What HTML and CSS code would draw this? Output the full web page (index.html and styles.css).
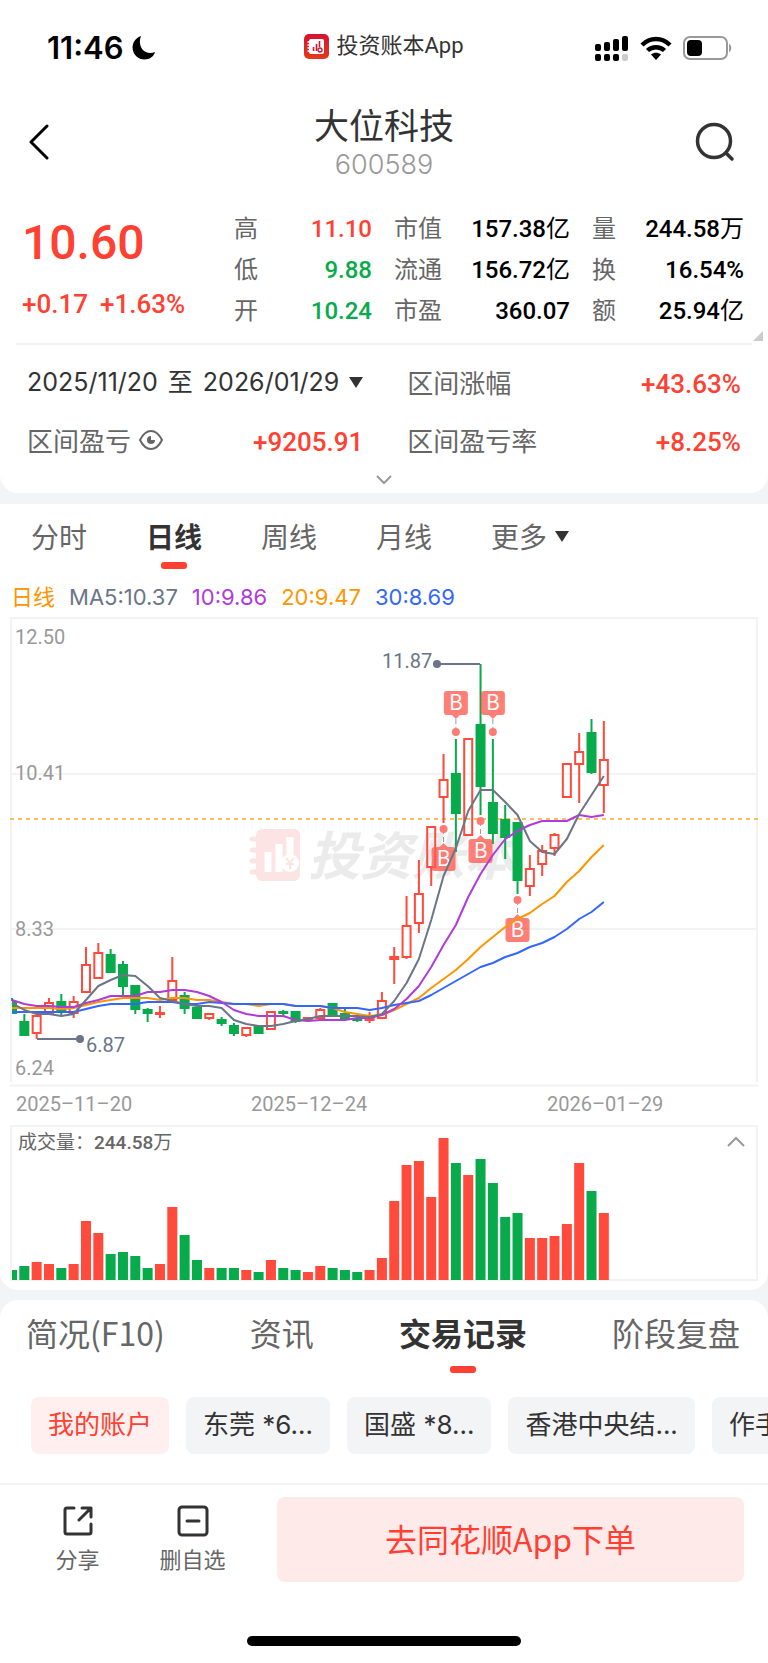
FILE: index.html
```
<!DOCTYPE html>
<html lang="zh-CN">
<head>
    <meta charset="UTF-8">
    <meta name="viewport" content="width=device-width, initial-scale=1.0">
    <title>大位科技 600589</title>
    <link rel="stylesheet" href="styles.css">
</head>
<body>
    <!-- 顶部卡片 -->
    <section class="card card-top">
        <div class="status-bar">
            <div class="status-time">
                <span>11:46</span>
                <svg width="24" height="26" viewBox="0 0 24 26"><path d="M9 1C0 4 -2 15 4 21c6 6 17 4 19-4C12 21 5 11 9 1z"/></svg>
            </div>
            <div class="status-app">
                <svg width="25" height="25" viewBox="0 0 25 25">
                    <defs><linearGradient id="logo" x1="0" y1="0" x2="0" y2="1"><stop offset="0" stop-color="#d8122f"/><stop offset="1" stop-color="#e23a1c"/></linearGradient></defs>
                    <rect width="25" height="25" rx="5" fill="url(#logo)"/>
                    <rect x="5" y="5" width="15" height="15" rx="2" fill="#fff"/>
                    <path d="M3.500 8h3M3.500 11h3M3.500 14h3M3.500 17h3" stroke="#fff" stroke-width="1.300"/>
                    <path d="M9.500 17v-4M12.500 17v-7M15.500 13V7" stroke="#d8122f" stroke-width="1.600"/>
                    <circle cx="16" cy="16" r="2" fill="none" stroke="#d8122f" stroke-width="1.300"/>
                </svg>
                <span>投资账本App</span>
            </div>
            <div class="status-icons">
                <svg width="34" height="25" viewBox="0 0 34 25">
                    <rect x="0" y="8" width="6" height="7" rx="2"/><rect x="9" y="6" width="6" height="9" rx="2"/>
                    <rect x="18" y="3" width="6" height="12" rx="2"/><rect x="27" y="0" width="6" height="15" rx="2"/>
                    <rect x="0" y="18" width="6" height="7" rx="2"/><rect x="9" y="18" width="6" height="7" rx="2"/>
                    <rect x="18" y="18" width="6" height="7" rx="2"/><rect x="27" y="18" width="6" height="7" rx="2" fill="#ccc"/>
                </svg>
                <svg width="32" height="24" viewBox="0 0 32 24">
                    <path d="M2 9C10 1 22 1 30 9" fill="none" stroke="#000" stroke-width="4.500"/>
                    <path d="M7.500 14.500C12 10 20 10 24.500 14.500" fill="none" stroke="#000" stroke-width="4.500"/>
                    <path d="M11 18.500C14 16 18 16 21 18.500L16 24z"/>
                </svg>
                <svg width="49" height="24" viewBox="0 0 49 24">
                    <rect x="1" y="1" width="43" height="22" rx="6" fill="none" stroke="#999" stroke-width="2"/>
                    <rect x="4" y="4" width="15" height="16" rx="4"/>
                    <path d="M46 8c3 1 3 7 0 8z" fill="#999"/>
                </svg>
            </div>
        </div>

        <header class="header">
            <button class="icon-btn" aria-label="返回">
                <svg width="22" height="36" viewBox="0 0 22 36"><path d="M19 2L3 18l16 16" fill="none" stroke="#000" stroke-width="3" stroke-linecap="round" stroke-linejoin="round"/></svg>
            </button>
            <div class="header-title">
                <h1>大位科技</h1>
                <p>600589</p>
            </div>
            <button class="icon-btn icon-search" aria-label="搜索">
                <svg width="40" height="40" viewBox="0 0 40 40" fill="none" stroke="#333" stroke-width="3.500" stroke-linecap="round"><circle cx="19" cy="19" r="16.500"/><path d="M31 31l6 6"/></svg>
            </button>
        </header>

        <!-- 行情 -->
        <div class="quote">
            <div class="quote-price">
                <div class="price">10.60</div>
                <div class="change"><span>+0.17</span><span>+1.63%</span></div>
            </div>
            <dl class="quote-stats">
                <div><dt>高</dt><dd class="up">11.10</dd></div>
                <div><dt>市值</dt><dd>157.38<span class="unit">亿</span></dd></div>
                <div><dt>量</dt><dd>244.58<span class="unit">万</span></dd></div>
                <div><dt>低</dt><dd class="down">9.88</dd></div>
                <div><dt>流通</dt><dd>156.72<span class="unit">亿</span></dd></div>
                <div><dt>换</dt><dd>16.54%</dd></div>
                <div><dt>开</dt><dd class="down">10.24</dd></div>
                <div><dt>市盈</dt><dd>360.07</dd></div>
                <div><dt>额</dt><dd>25.94<span class="unit">亿</span></dd></div>
            </dl>
        </div>

        <!-- 区间 -->
        <div class="range">
            <button class="range-date"><span>2025/11/20</span> <span>至</span> <span>2026/01/29</span><i class="caret"></i></button>
            <div class="range-item"><span>区间涨幅</span><b>+43.63%</b></div>
            <div class="range-item">
                <span>区间盈亏
                    <svg width="26" height="22" viewBox="0 0 26 22" fill="none" stroke="#666" stroke-width="2"><path d="M2 11C8-1 18-1 24 11C18 23 8 23 2 11z"/><circle cx="13" cy="11" r="4" fill="#666" stroke="none"/><path d="M13 11V6h5v5z" fill="#fff" stroke="none"/></svg>
                </span>
                <b>+9205.91</b>
            </div>
            <div class="range-item"><span>区间盈亏率</span><b>+8.25%</b></div>
        </div>
        <button class="expand" aria-label="展开">
            <svg width="18" height="10" viewBox="0 0 18 10"><path d="M2 1l7 7 7-7" fill="none" stroke="#999" stroke-width="2"/></svg>
        </button>
    </section>

    <!-- K线图 -->
    <section class="card card-chart">
        <nav class="tabs">
            <button>分时</button>
            <button class="active">日线</button>
            <button>周线</button>
            <button>月线</button>
            <button>更多<i class="caret"></i></button>
        </nav>
        <div class="ma">
            <span class="ma-name">日线</span>
            <span class="ma5">MA5:10.37</span>
            <span class="ma10">10:9.86</span>
            <span class="ma20">20:9.47</span>
            <span class="ma30">30:8.69</span>
        </div>
        <svg class="chart" id="kline" viewBox="0 614 768 506">
            <path class="frame" d="M11 1082V618H757V1082M10 1085.500H758"/>
            <path class="grid" d="M12 774H756M12 929H756"/>
            <g class="watermark">
                <rect x="256" y="829" width="44" height="52" rx="6" fill="#fce4e4"/>
                <path d="M252 839h9M252 850h9M252 861h9M252 872h9" stroke="#fce4e4" stroke-width="5" stroke-linecap="round"/>
                <path d="M268 872v-20M279 872v-28M290 858v-21" stroke="#fff" stroke-width="7"/>
                <circle cx="290" cy="863" r="9" fill="#fff"/>
                <path d="M286 858l4 5 4-5M290 863v6M286 864h8" fill="none" stroke="#fce4e4" stroke-width="2"/>
                <text x="308" y="875">投资账本</text>
            </g>
            <path class="cost" d="M10 819H758"/>
            <g id="candles"></g>
            <g class="extreme">
                <path d="M437 664H480M37 1039H80"/>
                <circle cx="437" cy="664" r="4"/>
                <circle cx="80" cy="1039" r="4"/>
                <text x="382" y="668">11.87</text>
                <text x="86" y="1052">6.87</text>
            </g>
            <g class="axis">
                <text x="15" y="644">12.50</text>
                <text x="15" y="780">10.41</text>
                <text x="15" y="936">8.33</text>
                <text x="15" y="1075">6.24</text>
                <text x="16" y="1111">2025–11–20</text>
                <text x="251" y="1111">2025–12–24</text>
                <text x="547" y="1111">2026–01–29</text>
            </g>
        </svg>
        <div class="volume">
            <svg class="chart" id="volume" viewBox="0 1120 768 170">
                <rect class="frame" x="11" y="1126" width="746" height="154"/>
                <text x="18" y="1149">成交量：<tspan class="vol-num">244.58</tspan>万</text>
                <g id="bars"></g>
            </svg>
            <button class="fold" aria-label="收起">
                <svg width="20" height="12" viewBox="0 0 20 12"><path d="M2 10l8-8 8 8" fill="none" stroke="#999" stroke-width="2"/></svg>
            </button>
        </div>
    </section>

    <!-- 交易记录 -->
    <section class="card card-record">
        <nav class="tabs tabs-record">
            <button>简况(F10)</button>
            <button>资讯</button>
            <button class="active">交易记录</button>
            <button>阶段复盘</button>
        </nav>
        <div class="accounts">
            <button class="selected">我的账户</button>
            <button>东莞 *6...</button>
            <button>国盛 *8...</button>
            <button>香港中央结...</button>
            <button>作手账户</button>
        </div>
    </section>

    <footer class="footer">
        <div class="actions">
            <button class="action">
                <svg width="32" height="32" viewBox="0 0 32 32" fill="none" stroke="#333" stroke-width="3" stroke-linecap="round" stroke-linejoin="round"><path d="M12 3H5a2 2 0 0 0-2 2v22a2 2 0 0 0 2 2h22a2 2 0 0 0 2-2V19M20 3h9v9M28 4L17 15"/></svg>
                分享
            </button>
            <button class="action">
                <svg width="32" height="32" viewBox="0 0 32 32" fill="none" stroke="#333" stroke-width="3" stroke-linecap="round"><rect x="2" y="2" width="28" height="28" rx="3"/><path d="M10 16h12"/></svg>
                删自选
            </button>
            <button class="order">去同花顺App下单</button>
        </div>
        <div class="home-bar"></div>
    </footer>

    <script src="script.js"></script>
</body>
</html>
```
FILE: styles.css
```
* {
    box-sizing: border-box;
}
body {
    margin: 0;
    background-color: #f3f4f6;
    font-family: "Noto Sans CJK SC", sans-serif;
    color: #333;
}
button {
    margin: 0;
    padding: 0;
    border: 0;
    background: none;
    font-family: inherit;
    color: inherit;
}
h1, p, dl, dd {
    margin: 0;
    font-weight: 400;
}
svg {
    display: block;
}
.card {
    background-color: #fff;
}
.card-top {
    border-radius: 0 0 18px 18px;
    margin-bottom: 11px;
}

/* 状态栏 */
.status-bar {
    display: grid;
    grid-template-columns: 1fr auto 1fr;
    align-items: center;
    height: 92px;
    padding: 4px 36px 0;
}
.status-time {
    display: flex;
    align-items: center;
    gap: 8px;
    padding-left: 11px;
    font: 600 31px/36px Inter, sans-serif;
    color: #000;
}
.status-app {
    display: flex;
    align-items: center;
    gap: 7px;
    padding-bottom: 4px;
    font: 400 22px/32px Roboto, "Noto Sans CJK SC", sans-serif;
}
.status-icons {
    display: flex;
    align-items: center;
    justify-content: flex-end;
    gap: 11px;
}

.header {
    display: grid;
    grid-template-columns: 60px 1fr 60px;
    align-items: center;
    padding: 10px 28px 22px;
}
.header-title {
    text-align: center;
}
.header-title h1 {
    font-size: 35px;
    line-height: 44px;
}
.header-title p {
    padding-top: 2px;
    font: 300 27px/34px Inter, sans-serif;
    color: #999;
}
.icon-search {
    justify-self: end;
    padding-right: 5px;
}

/* 行情 */
.quote {
    position: relative;
    display: flex;
    margin: 0 16px;
    padding: 2px 8px 13px 6px;
    border-bottom: 2px solid #f3f3f3;
}
.quote::after {
    content: "";
    position: absolute;
    right: -11px;
    bottom: 2px;
    border-left: 10px solid transparent;
    border-bottom: 10px solid #ccc;
}
.quote-price {
    flex: 0 0 212px;
    padding-top: 2px;
    font-family: Roboto, sans-serif;
    font-weight: 500;
    color: #ff4032;
}
.price {
    font-size: 48px;
    line-height: 70px;
}
.change {
    display: flex;
    gap: 12px;
    font-size: 26px;
    line-height: 52px;
}
.quote-stats {
    flex: 1;
    display: grid;
    grid-template-columns: 138fr 176fr 152fr;
    grid-auto-rows: 41px;
    column-gap: 22px;
    font-size: 24px;
    line-height: 41px;
}
.quote-stats div {
    display: flex;
    align-items: baseline;
    justify-content: space-between;
}
.quote-stats dt {
    color: #666;
}
.quote-stats dd {
    font-family: Roboto, "Noto Sans CJK SC", sans-serif;
    font-weight: 500;
    color: #000;
}
.quote-stats .unit {
    font-weight: 400;
}
.quote-stats .up {
    color: #ff4032;
}
.quote-stats .down {
    color: #08ab4b;
}

/* 区间 */
.range {
    display: grid;
    grid-template-columns: 1fr 1fr;
    grid-auto-rows: 58px;
    column-gap: 44px;
    padding: 8px 27px 0;
    font-size: 26px;
    line-height: 58px;
}
.range-date {
    display: flex;
    align-items: center;
    gap: 10px;
    font: 400 25px/58px Inter, "Noto Sans CJK SC", sans-serif;
    white-space: nowrap;
}
.caret {
    border: 7px solid transparent;
    border-top: 11px solid #333;
    border-bottom: 0;
}
.range-item {
    display: flex;
    align-items: baseline;
    justify-content: space-between;
    color: #666;
}
.range-item span {
    display: flex;
    align-items: center;
    gap: 7px;
}
.range-item b {
    font-family: Roboto, sans-serif;
    font-weight: 500;
    color: #ff4032;
}
.expand {
    display: flex;
    justify-content: center;
    width: 100%;
    height: 24px;
    padding-top: 6px;
}

/* K线图 */
.card-chart {
    border-radius: 0 0 18px 18px;
    margin-bottom: 10px;
}
.tabs {
    display: flex;
    gap: 59px;
    padding: 8px 31px 0;
}
.tabs button {
    position: relative;
    display: flex;
    align-items: center;
    gap: 8px;
    padding-bottom: 9px;
    font-size: 28px;
    line-height: 48px;
    color: #666;
}
.tabs .active {
    font-weight: 700;
    color: #333;
}
.tabs .active::after {
    content: "";
    position: absolute;
    left: 50%;
    bottom: 0;
    width: 26px;
    height: 7px;
    margin-left: -13px;
    border-radius: 3px;
    background-color: #ff4032;
}
.ma {
    display: flex;
    gap: 14px;
    padding: 11px 11px 0;
    font: 400 22px/34px Inter, "Noto Sans CJK SC", sans-serif;
}
.ma-name, .ma20 {
    color: #ff9500;
}
.ma5 {
    color: #6b7587;
}
.ma10 {
    color: #b03bdb;
}
.ma30 {
    color: #3366ff;
}
.chart {
    width: 100%;
    height: auto;
}
.frame {
    fill: none;
    stroke: #f3f3f3;
    stroke-width: 2;
}
.grid {
    stroke: #f3f3f3;
    stroke-width: 2;
}
.cost {
    stroke: #ffbd5c;
    stroke-width: 2;
    stroke-dasharray: 4 4;
}
.watermark text {
    font-size: 52px;
    font-weight: 700;
    font-style: italic;
    fill: #ebebeb;
}
.axis text, .extreme text {
    font-family: Roboto, sans-serif;
    font-size: 20px;
}
.axis text {
    fill: #999;
}
.extreme path {
    stroke: #6b7587;
    stroke-width: 2;
}
.extreme {
    fill: #6b7587;
}
.line {
    fill: none;
    stroke-width: 2;
    stroke-linejoin: round;
}
.tag {
    fill: #ff5a50;
    opacity: 0.78;
}
.tag-text {
    font-size: 21px;
    fill: #fff;
    text-anchor: middle;
}
.tag-link {
    stroke: #999;
    stroke-dasharray: 5 3;
}
.volume {
    position: relative;
}
.volume text {
    font-size: 19px;
    fill: #666;
}
.volume .vol-num {
    font-family: Roboto, sans-serif;
    font-weight: 500;
}
.fold {
    position: absolute;
    top: 16px;
    right: 22px;
}

/* 交易记录 */
.card-record {
    border-radius: 18px 18px 0 0;
    padding-bottom: 29px;
}
.tabs-record {
    justify-content: space-between;
    gap: 0;
    padding: 0 28px 0 26px;
}
.tabs-record button {
    font-size: 32px;
    line-height: 64px;
}
.accounts {
    display: flex;
    gap: 17px;
    margin-top: 24px;
    padding-left: 31px;
    overflow: hidden;
}
.accounts button {
    flex: none;
    padding: 0 17px 2px;
    border-radius: 8px;
    background-color: #f3f4f6;
    font: 400 26px/55px Inter, "Noto Sans CJK SC", sans-serif;
}
.accounts .selected {
    background-color: #fff0ef;
    color: #ff4032;
}

.footer {
    border-top: 2px solid #f3f3f3;
    background-color: #fff;
    padding: 12px 0 17px;
}
.actions {
    display: flex;
    align-items: center;
    padding: 0 24px 0 20px;
}
.action {
    flex: 0 0 115px;
    display: flex;
    flex-direction: column;
    align-items: center;
    gap: 5px;
    font-size: 22px;
    line-height: 32px;
    color: #666;
}
.order {
    flex: 1;
    margin-left: 27px;
    padding-bottom: 2px;
    border-radius: 8px;
    background-color: #ffeaea;
    font-size: 32px;
    line-height: 83px;
    color: #ff4032;
}
.home-bar {
    width: 274px;
    height: 10px;
    margin: 54px auto 0;
    border-radius: 5px;
    background-color: #000;
}
```
FILE: script.js
```
const RED = "#ff4a3c";
const GREEN = "#08ab4b";
const step = 12.33;
const baseline = 1280;

// [颜色, 影线上, 实体上, 实体下, 影线下, 成交量]
const days = [
    ["g", 998, 1001, 1014, 1014, 10], ["g", 1014, 1021, 1036, 1036, 14], ["r", 1015, 1016, 1033, 1039, 18],
    ["r", 998, 1003, 1013, 1015, 16], ["g", 994, 1001, 1013, 1015, 12], ["r", 996, 1002, 1013, 1018, 16],
    ["r", 947, 965, 992, 992, 59], ["r", 943, 953, 978, 978, 47], ["g", 949, 954, 973, 973, 26],
    ["g", 961, 964, 987, 999, 28], ["g", 985, 985, 1010, 1014, 24], ["g", 1008, 1009, 1014, 1022, 12],
    ["r", 1006, 1013, 1014, 1018, 16], ["r", 957, 981, 1000, 1000, 73], ["g", 992, 995, 1009, 1014, 45],
    ["g", 1007, 1007, 1019, 1019, 20], ["r", 1013, 1014, 1018, 1020, 12], ["g", 1017, 1019, 1024, 1026, 12],
    ["g", 1023, 1025, 1034, 1036, 12], ["r", 1027, 1028, 1035, 1037, 10], ["g", 1026, 1026, 1034, 1034, 8],
    ["r", 1011, 1012, 1029, 1029, 20], ["g", 1010, 1011, 1014, 1017, 12], ["g", 1011, 1011, 1022, 1023, 10],
    ["r", 1017, 1018, 1020, 1020, 8], ["r", 1008, 1010, 1018, 1021, 14], ["g", 1003, 1003, 1015, 1015, 12],
    ["g", 1008, 1013, 1019, 1019, 10], ["g", 1017, 1018, 1021, 1022, 8], ["r", 1012, 1018, 1020, 1023, 10],
    ["r", 992, 1001, 1018, 1019, 22], ["r", 947, 957, 959, 984, 79], ["r", 896, 926, 957, 959, 115],
    ["r", 860, 894, 923, 933, 119], ["r", 827, 827, 867, 886, 83], ["r", 754, 780, 797, 823, 142],
    ["g", 739, 773, 814, 852, 117], ["r", 739, 739, 835, 835, 105], ["g", 664, 724, 787, 815, 121],
    ["g", 739, 802, 834, 844, 97], ["g", 805, 819, 838, 859, 63], ["g", 822, 822, 881, 894, 67],
    ["r", 855, 869, 886, 896, 42], ["r", 845, 851, 864, 876, 42], ["r", 833, 835, 848, 856, 44],
    ["r", 764, 764, 797, 797, 56], ["r", 733, 752, 764, 803, 117], ["g", 719, 732, 773, 774, 89],
    ["r", 721, 760, 785, 813, 67]
];

const lines = {
    "#ff9500": [1008, 1008, 1008, 1008, 1009, 1008, 1005, 1002, 1000, 998, 998, 998, 1000, 998, 998, 1000, 1000, 1002, 1004, 1004, 1006, 1004, 1004, 1006, 1006, 1006, 1008, 1012, 1014, 1016, 1015, 1010, 1004, 998, 988, 979, 970, 959, 947, 937, 927, 919, 913, 904, 896, 882, 871, 857, 845],
    "#3366ff": [1012, 1012, 1012, 1012, 1012, 1012, 1009, 1006, 1004, 1004, 1004, 1002, 1002, 1002, 1004, 1004, 1002, 1003, 1004, 1004, 1004, 1004, 1004, 1006, 1006, 1006, 1008, 1008, 1008, 1010, 1008, 1005, 1003, 1001, 995, 988, 981, 974, 967, 963, 957, 953, 947, 943, 937, 929, 919, 912, 902],
    "#b03bdb": [1000, 1004, 1006, 1006, 1007, 1007, 1003, 1000, 996, 996, 996, 992, 992, 990, 990, 992, 996, 1002, 1010, 1014, 1016, 1016, 1016, 1020, 1021, 1020, 1020, 1020, 1018, 1018, 1015, 1009, 999, 986, 967, 945, 925, 897, 874, 855, 839, 831, 825, 821, 821, 821, 815, 817, 815],
    "#6b7587": [1003, 1010, 1014, 1014, 1016, 1014, 1000, 986, 980, 975, 976, 986, 998, 1001, 1004, 1006, 1006, 1008, 1020, 1024, 1026, 1026, 1024, 1021, 1019, 1016, 1016, 1016, 1016, 1017, 1014, 1001, 983, 959, 920, 876, 848, 811, 790, 790, 802, 815, 841, 852, 854, 839, 814, 795, 776]
};

// 买入点 [第几根, 圆点y, 标签在上方]
const buys = [[36, 732, true], [39, 732, true], [35, 829, false], [38, 821, false], [41, 900, false]];

function x(i) {
    return 12 + i * step;
}

let candles = "";
let bars = "";
days.forEach(([type, high, top, bottom, low, vol], i) => {
    const color = type === "r" ? RED : GREEN;
    const left = i === 0 ? 12 : x(i) - 5;
    const width = i === 0 ? 5 : 10;
    candles += `<path d="M${x(i)} ${high}V${top}M${x(i)} ${bottom}V${low}" stroke="${color}" stroke-width="2"/>`;
    if (type === "r") {
        candles += `<rect x="${x(i) - 4}" y="${top}" width="8" height="${bottom - top}" fill="none" stroke="${color}" stroke-width="2"/>`;
    } else {
        candles += `<rect x="${left}" y="${top}" width="${width}" height="${bottom - top}" fill="${color}"/>`;
    }
    bars += `<rect x="${left}" y="${baseline - vol}" width="${width}" height="${vol}" fill="${color}"/>`;
});

buys.forEach(([i, y, above]) => {
    const tagTop = above ? y - 41 : y + 18;
    const edge = above ? tagTop + 24 : tagTop;
    const tip = above ? edge + 4 : edge - 4;
    candles += `<path class="tag-link" d="M${x(i)} ${y}V${tip}"/>
        <circle cx="${x(i)}" cy="${y}" r="4" fill="#ff7b73"/>
        <path class="tag" d="M${x(i) - 4} ${edge}L${x(i)} ${tip}L${x(i) + 4} ${edge}z"/>
        <rect class="tag" x="${x(i) - 12}" y="${tagTop}" width="24" height="24" rx="3"/>
        <text class="tag-text" x="${x(i)}" y="${tagTop + 19}">B</text>`;
});

Object.entries(lines).forEach(([color, ys]) => {
    const points = ys.map((y, i) => `${x(i)},${y}`).join(" ");
    candles += `<polyline class="line" stroke="${color}" points="${points}"/>`;
});

document.getElementById("candles").innerHTML = candles;
document.getElementById("bars").innerHTML = bars;
```
